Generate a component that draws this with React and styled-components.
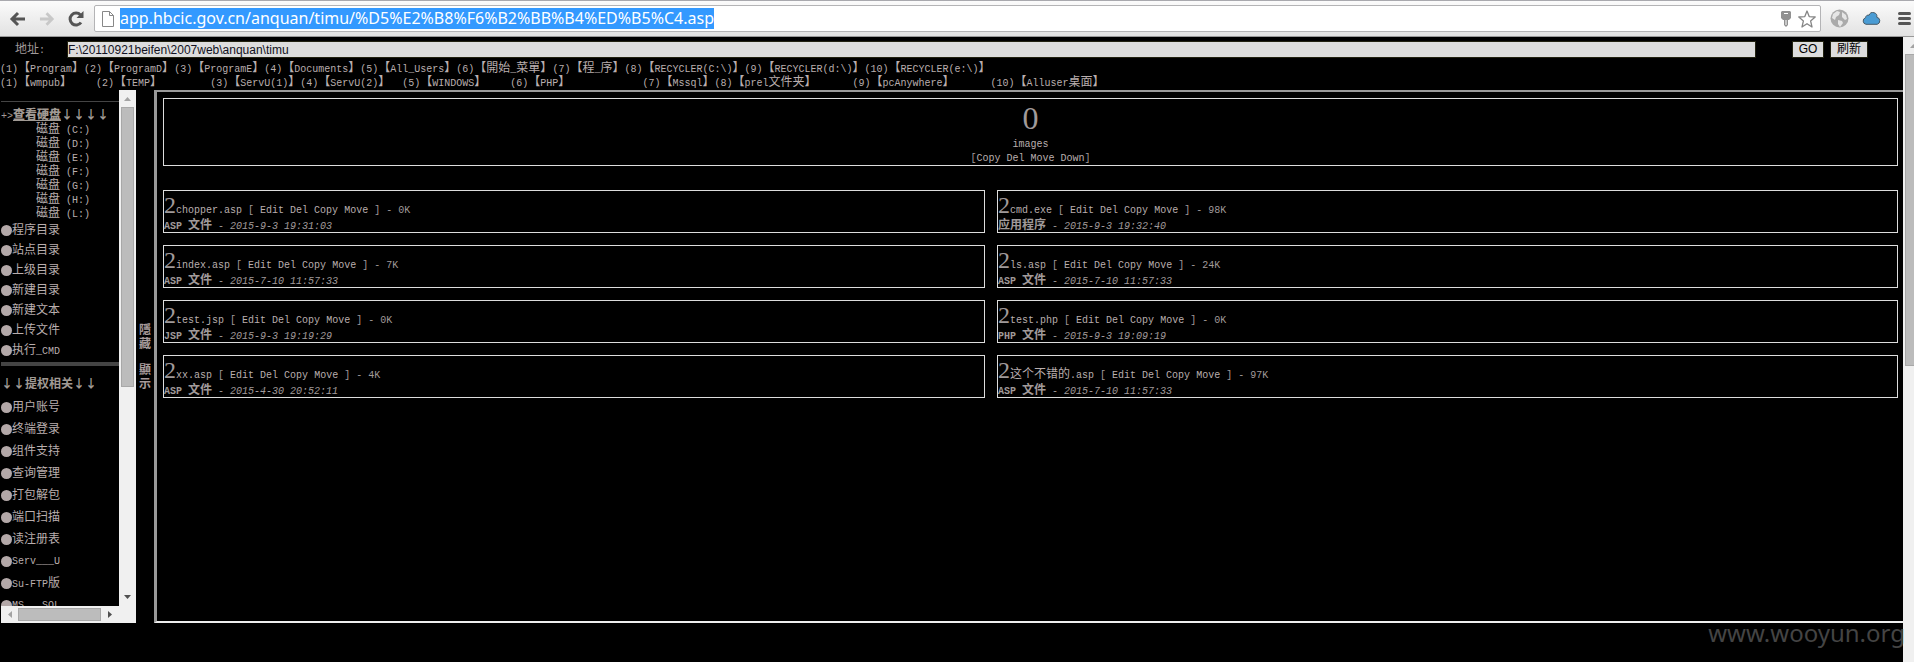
import React from "react";
import styled, { createGlobalStyle } from "styled-components";

const GlobalStyle = createGlobalStyle`
  * {
    box-sizing: border-box;
  }
  body {
    margin: 0;
    background: #000;
    color: #a09a9a;
    font-family: "Liberation Mono", "Noto Sans CJK SC", monospace;
    font-size: 10px;
    line-height: 14px;
    overflow: hidden;
  }
  a {
    color: #b9aeae;
    text-decoration: none;
  }
`;

const Page = styled.div`
  position: relative;
  display: flex;
  flex-direction: column;
  min-height: 100vh;
`;

const Toolbar = styled.header`
  display: flex;
  align-items: center;
  height: 37px;
  padding: 0 3px 0 9px;
  background: linear-gradient(#fbfbfb, #e2e2e2);
  border-top: 1px solid #a9a9ae;
  border-bottom: 1px solid #999;
`;

const ToolButton = styled.button`
  display: flex;
  margin: 0 ${(props) => props.$gap || 0}px 0 0;
  padding: 0;
  border: 0;
  background: none;
`;

const Omnibox = styled.div`
  display: flex;
  flex: 1;
  align-items: center;
  height: 27px;
  margin-right: 9px;
  padding: 0 4px 0 7px;
  background: #fff;
  border: 1px solid #b4b4b6;
  border-radius: 2px;
`;

const Url = styled.input`
  field-sizing: content;
  height: 21px;
  margin: 0 auto 0 6px;
  padding: 0;
  border: 0;
  background: #3399ff;
  color: #fff;
  font: 16px/21px "Noto Sans", sans-serif;
`;

const Body = styled.div`
  display: flex;
  flex: 1;
`;

const Content = styled.main`
  flex: 1;
  min-width: 0;
`;

const AddressForm = styled.form`
  display: flex;
  align-items: center;
  height: 24px;
  padding: 1px 35px 0 15px;
`;

const AddressLabel = styled.label`
  width: 52px;
`;

const AddressInput = styled.input`
  flex: 1;
  height: 17px;
  margin-right: 36px;
  padding: 0;
  border: 1px solid #221;
  background: #ddd;
  color: #112;
  font: 12px "Liberation Sans", sans-serif;
`;

const FormButton = styled.button`
  width: ${(props) => props.$width}px;
  height: 17px;
  margin-left: ${(props) => props.$gap || 0}px;
  padding: 0;
  border: 1px solid #221;
  background: #ddd;
  color: #000;
  font: 12px/15px "Liberation Sans", "Noto Sans CJK SC", sans-serif;
`;

const Shortcuts = styled.nav`
  height: 29px;
  white-space: pre;
`;

const ShortcutRow = styled.div`
  height: 14px;
  color: #b9aeae;
`;

const Zh = styled.span`
  font-family: "Noto Sans CJK SC", sans-serif;
  font-size: 12px;
  line-height: 12px;
`;

const Panels = styled.div`
  display: flex;
  height: 533px;
  padding-left: 1px;
`;

const Side = styled.aside`
  display: grid;
  grid-template-columns: 118px 17px;
  grid-template-rows: 1fr 17px;
  width: 135px;
  background: #f0f0f0;
`;

const SideContent = styled.div`
  min-height: 0;
  overflow: hidden;
  background: #000;
  white-space: nowrap;
`;

const Rule = styled.hr`
  height: ${(props) => props.$size}px;
  margin: ${(props) => props.$margin};
  border: 0;
  background: #444;
`;

const SideTitle = styled.div`
  height: 14px;
  color: #a09a94;
  font-weight: bold;
  b {
    text-decoration: ${(props) => (props.$underline ? "underline" : "none")};
  }
`;

const Plain = styled.span`
  font-weight: normal;
`;

const Disk = styled.a`
  display: block;
  height: 14px;
  padding-left: 35px;
`;

const MenuLink = styled.a`
  display: flex;
  align-items: center;
  height: ${(props) => props.$height}px;
  &::before {
    content: "";
    flex: none;
    width: 11px;
    height: 11px;
    border-radius: 50%;
    background: #b3a8a8;
  }
  > span {
    padding-top: 2px;
  }
`;

const MenuGroup = styled.nav`
  padding-top: ${(props) => props.$top || 0}px;
`;

const ScrollTrack = styled.div`
  display: flex;
  flex-direction: ${(props) => (props.$horizontal ? "row" : "column")};
  align-items: center;
  background: #f0f0f0;
`;

const PageScroll = styled(ScrollTrack)`
  width: 11px;
  padding-left: 2px;
  align-items: flex-start;
  overflow: hidden;
`;

const ScrollThumb = styled.div`
  flex: none;
  width: ${(props) => props.$width}px;
  height: ${(props) => props.$height}px;
  background: #bcbcbc;
  border: 1px solid #a8a8a8;
`;

const ScrollGap = styled.div`
  flex: 1;
`;

const ArrowIcon = styled.svg`
  flex: none;
`;

const Toggle = styled.div`
  display: flex;
  flex-direction: column;
  justify-content: center;
  gap: 12px;
  width: 18px;
  padding: 0 3px 2px;
  span {
    width: 12px;
    color: #a89c9c;
    font-weight: bold;
    line-height: 14px;
    white-space: normal;
    word-break: break-all;
  }
`;

const Frame = styled.section`
  flex: 1;
  min-width: 0;
  padding: 6px 5px 0 6px;
  border: 2px solid #999;
  border-left-width: 3px;
  border-right: 0;
  border-bottom-color: #eee;
`;

const FolderBox = styled.div`
  height: 68px;
  margin-bottom: 24px;
  padding-top: 3px;
  border: 1px solid #ddd;
  text-align: center;
`;

const FolderGlyph = styled.div`
  height: 36px;
  font: 32px/32px "Liberation Serif", serif;
`;

const FileGrid = styled.div`
  display: grid;
  grid-template-columns: 822fr 901fr;
  gap: 12px;
`;

const FileBox = styled.div`
  height: 43px;
  padding-top: 3px;
  border: 1px solid #ddd;
  white-space: nowrap;
`;

const FileLine = styled.div`
  display: flex;
  align-items: baseline;
  height: 24px;
  white-space: pre;
`;

const FileGlyph = styled.span`
  font: 24px/23px "Liberation Serif", serif;
`;

const Watermark = styled.div`
  position: absolute;
  right: 9px;
  bottom: 13px;
  color: #444;
  font: 24px/32px "Noto Sans", sans-serif;
`;

const diskLetters = ["C", "D", "E", "F", "G", "H", "L"];

const folderLinks = [
  "程序目录",
  "站点目录",
  "上级目录",
  "新建目录",
  "新建文本",
  "上传文件",
  "执行_CMD",
];

const toolLinks = [
  "用户账号",
  "终端登录",
  "组件支持",
  "查询管理",
  "打包解包",
  "端口扫描",
  "读注册表",
  "Serv___U",
  "Su-FTP版",
  "MS___SQL",
];

const shortcutRows = [
  "(1)【Program】(2)【ProgramD】(3)【ProgramE】(4)【Documents】(5)【All_Users】(6)【開始_菜單】(7)【程_序】(8)【RECYCLER(C:\\)】(9)【RECYCLER(d:\\)】(10)【RECYCLER(e:\\)】",
  "(1)【wmpub】    (2)【TEMP】        (3)【ServU(1)】(4)【ServU(2)】  (5)【WINDOWS】    (6)【PHP】            (7)【Mssql】(8)【prel文件夹】      (9)【pcAnywhere】      (10)【Alluser桌面】",
];

const files = [
  { name: "chopper.asp", size: "0K", type: "ASP 文件", date: "2015-9-3 19:31:03" },
  { name: "cmd.exe", size: "98K", type: "应用程序", date: "2015-9-3 19:32:40" },
  { name: "index.asp", size: "7K", type: "ASP 文件", date: "2015-7-10 11:57:33" },
  { name: "ls.asp", size: "24K", type: "ASP 文件", date: "2015-7-10 11:57:33" },
  { name: "test.jsp", size: "0K", type: "JSP 文件", date: "2015-9-3 19:19:29" },
  { name: "test.php", size: "0K", type: "PHP 文件", date: "2015-9-3 19:09:19" },
  { name: "xx.asp", size: "4K", type: "ASP 文件", date: "2015-4-30 20:52:11" },
  { name: "这个不错的.asp", size: "97K", type: "ASP 文件", date: "2015-7-10 11:57:33" },
];

// Chinese runs are set two half-width columns wide
const Mixed = ({ children }) => (
  <span>
    {children
      .split(/([\u2190-\u21ff\u3000-\u9fff]+)/)
      .map((part, i) => (i % 2 ? <Zh key={i}>{part}</Zh> : part))}
  </span>
);

const Arrow = ({ dir, muted }) => {
  const turn = { up: 0, right: 90, down: 180, left: 270 }[dir];
  return (
    <ArrowIcon width="17" height="17" viewBox="0 0 17 17">
      <path
        d="M5 11h7L8.500 7z"
        fill={muted ? "#a3a3a3" : "#505050"}
        transform={`rotate(${turn} 8.500 8.500)`}
      />
    </ArrowIcon>
  );
};

const BrowserBar = () => (
  <Toolbar>
    <ToolButton aria-label="Back" $gap={13}>
      <svg width="17" height="16" viewBox="0 0 17 16" fill="none" stroke="#555" strokeWidth="3">
        <path d="M16 8H3M9 2L3 8l6 6" />
      </svg>
    </ToolButton>
    <ToolButton aria-label="Forward" $gap={13}>
      <svg width="16" height="16" viewBox="0 0 17 16" fill="none" stroke="#c8c8c8" strokeWidth="3">
        <path d="M1 8h13M8 2l6 6-6 6" />
      </svg>
    </ToolButton>
    <ToolButton aria-label="Reload" $gap={10}>
      <svg width="16" height="16" viewBox="0 0 16 16">
        <path d="M13 11.500A6 6 0 1 1 12.500 4" fill="none" stroke="#555" strokeWidth="3" />
        <path d="M15.500 0v7H8.500z" fill="#555" />
      </svg>
    </ToolButton>
    <Omnibox>
      <svg width="12" height="16" viewBox="0 0 12 16" fill="#fff" stroke="#888">
        <path d="M.5.5h7l4 4v11H.5zM7.500.5v4h4" />
      </svg>
      <Url
        aria-label="URL"
        defaultValue="app.hbcic.gov.cn/anquan/timu/%D5%E2%B8%F6%B2%BB%B4%ED%B5%C4.asp"
      />
      <ToolButton aria-label="Passwords" $gap={7}>
        <svg width="10" height="16" viewBox="0 0 10 16">
          <path d="M1 0h8l1 1v6L8 9H7v5l-2 2-2-2V9H2L0 7V1z" fill="#919191" />
          <path d="M3 2h4v1H3zM4.500 9h1v5h-1z" fill="#fff" />
        </svg>
      </ToolButton>
      <ToolButton aria-label="Bookmark">
        <svg width="18" height="18" viewBox="0 0 18 18">
          <path
            d="M9 1l2.200 5.600 6 .4-4.600 3.900L14 17l-5-3.300L4 17l1.400-6.100L.8 7l6-.4z"
            fill="#fff"
            stroke="#858585"
            strokeWidth="1.300"
            strokeLinejoin="round"
          />
        </svg>
      </ToolButton>
    </Omnibox>
    <ToolButton aria-label="Globe" $gap={13}>
      <svg width="19" height="19" viewBox="0 0 19 19">
        <circle cx="9.500" cy="9.500" r="9" fill="#aaa" />
        <path d="M3 5l4-3 3 1-1 3-3 2-1 3-3-2zM12 3l4 3 1 4-2 1-3-3zM8 11l4 1 1 2-3 4-2-3z" fill="#e6e6e6" />
      </svg>
    </ToolButton>
    <ToolButton aria-label="Cloud" $gap={17}>
      <svg width="19" height="13" viewBox="0 0 19 13">
        <path
          d="M4 12.300a3.400 3.400 0 0 1-.4-6.600 2.700 2.700 0 0 1 3.500-2.500 4 4 0 0 1 7.700 2.100 3.600 3.600 0 0 1 .4 7z"
          fill="#4a9cd4"
          stroke="#455a68"
        />
      </svg>
    </ToolButton>
    <ToolButton aria-label="Menu">
      <svg width="13" height="13" viewBox="0 0 13 13" stroke="#555" strokeWidth="3" strokeLinecap="round">
        <path d="M1.500 1.500h10M1.500 6.500h10M1.500 11.500h10" />
      </svg>
    </ToolButton>
  </Toolbar>
);

const Sidebar = () => (
  <Side>
    <SideContent>
      <Rule $size={1} $margin="11px 0 6px" />
      <SideTitle $underline>
        <Plain>+&gt;</Plain>
        <b>
          <Zh>查看硬盘</Zh>
        </b>
        <Zh>↓↓↓↓</Zh>
      </SideTitle>
      {diskLetters.map((letter) => (
        <Disk href="#" key={letter}>
          <Mixed>{`磁盘 (${letter}:)`}</Mixed>
        </Disk>
      ))}
      <MenuGroup>
        {folderLinks.map((text) => (
          <MenuLink href="#" key={text} $height={20}>
            <Mixed>{text}</Mixed>
          </MenuLink>
        ))}
      </MenuGroup>
      <Rule $size={4} $margin="2px 0 11px" />
      <SideTitle>
        <Zh>↓↓提权相关↓↓</Zh>
      </SideTitle>
      <MenuGroup $top={5}>
        {toolLinks.map((text) => (
          <MenuLink href="#" key={text} $height={22}>
            <Mixed>{text}</Mixed>
          </MenuLink>
        ))}
      </MenuGroup>
    </SideContent>
    <ScrollTrack>
      <Arrow dir="up" muted />
      <ScrollThumb $width={13} $height={280} />
      <ScrollGap />
      <Arrow dir="down" />
    </ScrollTrack>
    <ScrollTrack $horizontal>
      <Arrow dir="left" muted />
      <ScrollThumb $width={83} $height={13} />
      <ScrollGap />
      <Arrow dir="right" />
    </ScrollTrack>
  </Side>
);

const FileCard = ({ file }) => (
  <FileBox>
    <FileLine>
      <FileGlyph>2</FileGlyph>
      <span>
        <a href="#">
          <Mixed>{file.name}</Mixed>
        </a>
        {" [ "}
        <a href="#">Edit</a> <a href="#">Del</a> <a href="#">Copy</a> <a href="#">Move</a>
        {` ] - ${file.size}`}
      </span>
    </FileLine>
    <b>
      <Mixed>{file.type}</Mixed>
    </b>
    {" - "}
    <i>{file.date}</i>
  </FileBox>
);

const App = () => {
  return (
    <Page>
      <GlobalStyle />
      <BrowserBar />
      <Body>
        <Content>
          <AddressForm>
            <AddressLabel htmlFor="path">
              <Mixed>地址:</Mixed>
            </AddressLabel>
            <AddressInput id="path" defaultValue="F:\20110921beifen\2007web\anquan\timu" />
            <FormButton type="button" $width={32}>
              GO
            </FormButton>
            <FormButton type="button" $width={38} $gap={6}>
              刷新
            </FormButton>
          </AddressForm>
          <Shortcuts>
            {shortcutRows.map((row) => (
              <ShortcutRow key={row}>
                <Mixed>{row}</Mixed>
              </ShortcutRow>
            ))}
          </Shortcuts>
          <Panels>
            <Sidebar />
            <Toggle>
              <Zh>隱藏</Zh>
              <Zh>顯示</Zh>
            </Toggle>
            <Frame>
              <FolderBox>
                <FolderGlyph>0</FolderGlyph>
                <a href="#">images</a>
                <div>
                  [<a href="#">Copy</a> <a href="#">Del</a> <a href="#">Move</a> <a href="#">Down</a>]
                </div>
              </FolderBox>
              <FileGrid>
                {files.map((file) => (
                  <FileCard key={file.name} file={file} />
                ))}
              </FileGrid>
            </Frame>
          </Panels>
        </Content>
        <PageScroll>
          <Arrow dir="up" muted />
          <ScrollThumb $width={13} $height={312} />
        </PageScroll>
      </Body>
      <Watermark>www.wooyun.org</Watermark>
    </Page>
  );
};

export default App;
